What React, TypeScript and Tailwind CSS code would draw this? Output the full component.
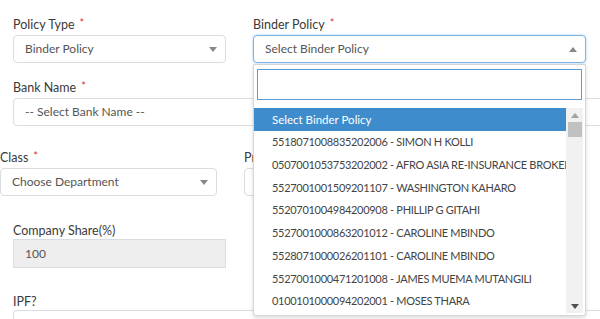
import React from "react";

const options = [
  "5518071008835202006 - SIMON H KOLLI",
  "0507001053753202002 - AFRO ASIA RE-INSURANCE BROKERS",
  "5527001001509201107 - WASHINGTON KAHARO",
  "5520701004984200908 - PHILLIP G GITAHI",
  "5527001000863201012 - CAROLINE MBINDO",
  "5528071000026201101 - CAROLINE MBINDO",
  "5527001000471201008 - JAMES MUEMA MUTANGILI",
  "0100101000094202001 - MOSES THARA",
];

function Caret({ up = false, color = "#888" }: { up?: boolean; color?: string }) {
  return (
    <svg width="8" height="5" viewBox="0 0 8 5" className="shrink-0">
      {up ? <path d="M0 5 L4 0 L8 5 Z" fill={color} /> : <path d="M0 0 L8 0 L4 5 Z" fill={color} />}
    </svg>
  );
}

function Label({ text, required = false }: { text: string; required?: boolean }) {
  return (
    <div className="h-[16px] flex items-center text-[12.5px] text-[#3a3a3a] leading-none whitespace-nowrap">
      {text}
      {required && <span className="text-[#e3342f] ml-[5px] -mt-[6px] text-[11px]">*</span>}
    </div>
  );
}

function Select({ text, className = "" }: { text: string; className?: string }) {
  return (
    <div
      className={
        "h-[28px] mt-[2px] border border-[#d9dce1] rounded-[4px] bg-white flex items-center justify-between pl-[11px] pr-[8px] text-[12px] text-[#555] " +
        className
      }
    >
      <span>{text}</span>
      <Caret />
    </div>
  );
}

export default function App() {
  return (
    <div className="relative w-[600px] h-[319px] overflow-hidden bg-white font-['Lato',sans-serif]">
      <div className="flex pt-[17px]">
        <div className="ml-[13px] w-[213px]">
          <Label text="Policy Type" required />
          <Select text="Binder Policy" />
        </div>
        <div className="ml-[27px] w-[333px]">
          <Label text="Binder Policy" required />
          <div className="h-[28px] mt-[2px] border border-[#7fb2e5] rounded-[4px] shadow-[0_0_3px_#a9cff2] bg-white flex items-center justify-between pl-[11px] pr-[8px] text-[12px] text-[#555]">
            <span>Select Binder Policy</span>
            <Caret up />
          </div>
        </div>
      </div>

      <div className="ml-[13px] mt-[17px] w-[620px]">
        <Label text="Bank Name" required />
        <Select text="-- Select Bank Name --" />
      </div>

      <div className="flex mt-[24px]">
        <div className="w-[217px]">
          <Label text="Class" required />
          <Select text="Choose Department" />
        </div>
        <div className="ml-[27px] w-[300px]">
          <Label text="Premium" />
          <Select text="" />
        </div>
      </div>

      <div className="flex mt-[27px]">
        <div className="ml-[13px] w-[213px]">
          <Label text="Company Share(%)" />
          <div className="h-[29px] border border-[#d9dce1] bg-[#eeeeee] flex items-center pl-[11px] text-[12px] text-[#555]">
            100
          </div>
        </div>
        <div className="ml-[27px] w-[300px]">
          <Label text="" />
          <div className="h-[29px] border border-[#d9dce1] bg-white" />
        </div>
      </div>

      <div className="ml-[13px] mt-[26px] w-[620px]">
        <Label text="IPF?" />
        <div className="h-[28px] border border-[#d9dce1] rounded-[4px] bg-white" />
      </div>

      <div className="absolute left-[253px] top-[64px] w-[333px] h-[252px] bg-white border border-[#d6d6d6] rounded-b-[3px] shadow-[0_2px_4px_rgba(0,0,0,0.15)]">
        <div className="px-[3px] pt-[4px] pb-[8px]">
          <div className="h-[31px] border border-[#5d9bd6] bg-white" />
        </div>
        <div className="flex">
          <div className="flex-1 min-w-0">
            <div className="h-[23px] flex items-center pl-[18px] bg-[#3f8ccd] text-white text-[11.5px]">
              Select Binder Policy
            </div>
            {options.map((o) => (
              <div
                key={o}
                className="h-[22.75px] flex items-center pl-[18px] text-[11px] text-[#444] whitespace-nowrap overflow-hidden tracking-[-0.3px]"
              >
                {o}
              </div>
            ))}
          </div>
          <div className="w-[17px] mr-[2px] h-[205px] shrink-0 bg-[#f1f1f1] flex flex-col items-center">
            <div className="h-[14px] flex items-center justify-center">
              <Caret up color="#a3a3a3" />
            </div>
            <div className="w-[14px] h-[15px] bg-[#c1c1c1]" />
            <div className="flex-1" />
            <div className="h-[14px] flex items-center justify-center">
              <Caret color="#505050" />
            </div>
          </div>
        </div>
      </div>
    </div>
  );
}
